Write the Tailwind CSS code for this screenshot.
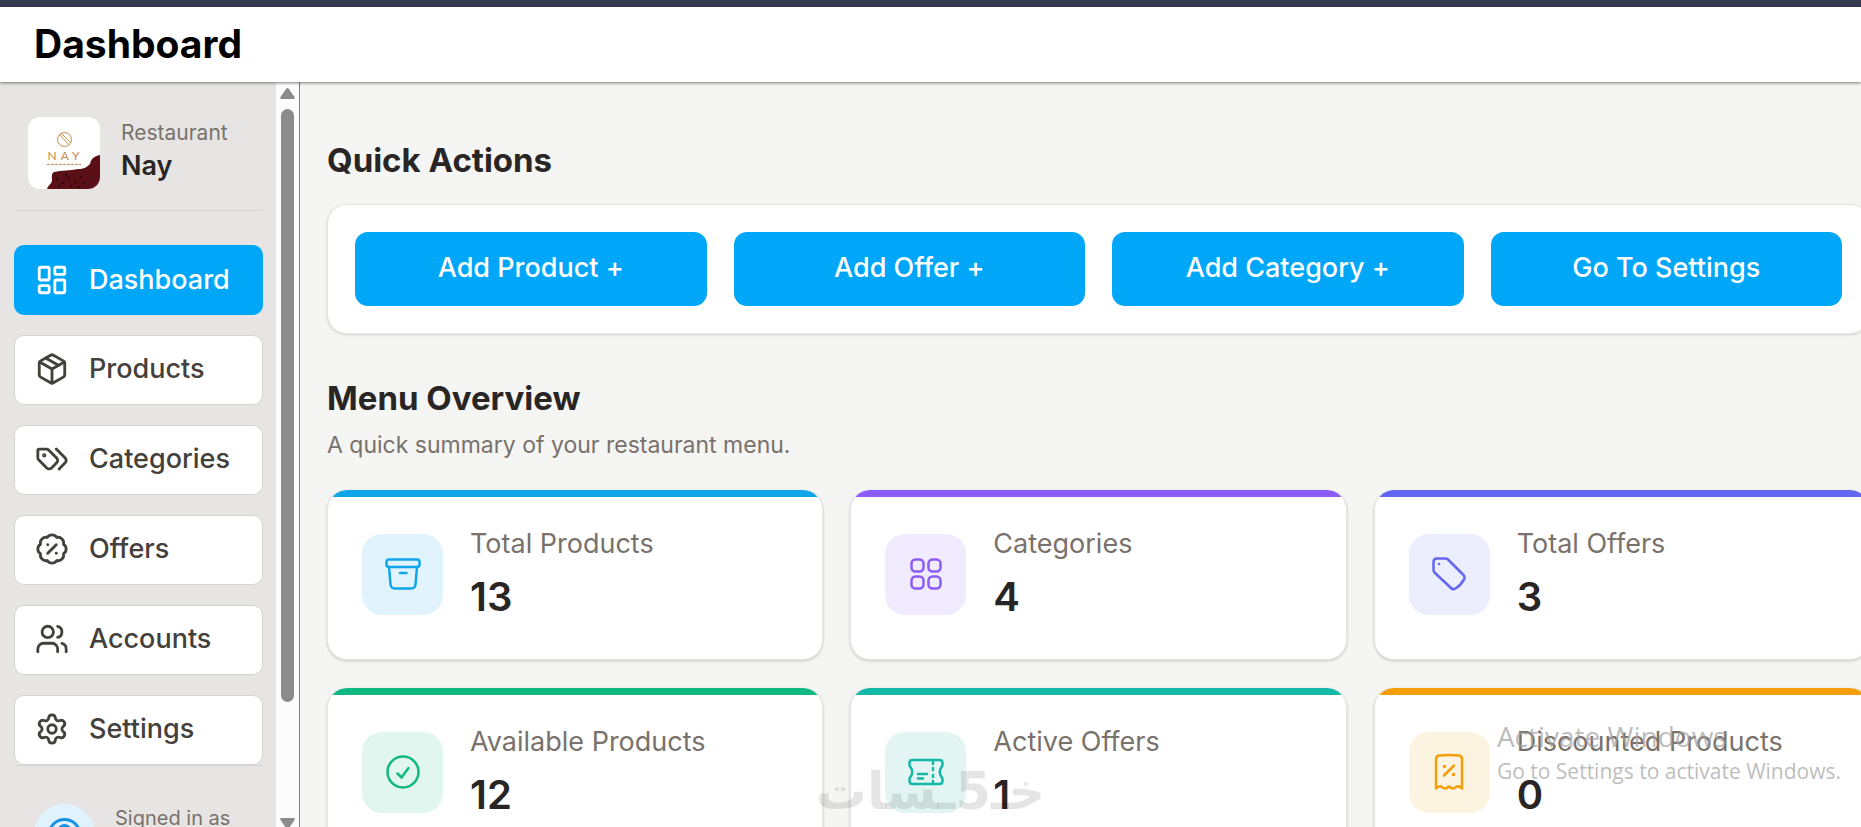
<!DOCTYPE html>
<html lang="en">
<head>
  <meta charset="UTF-8">
  <meta name="viewport" content="width=device-width, initial-scale=1.0">
  <title>Dashboard</title>
  <script src="https://cdn.jsdelivr.net/npm/@tailwindcss/browser@4"></script>
  <style>
    body {
      font-family: Inter, 'Liberation Sans', sans-serif;
    }
  </style>
</head>
<body class="relative h-screen overflow-hidden flex flex-col bg-stone-100 text-stone-800">
  <div class="h-[7px] shrink-0 bg-[#363a50]"></div>

  <!-- Header -->
  <header class="relative z-10 h-[75px] shrink-0 flex items-center px-[34px] pb-[2px] bg-white shadow-[0_1px_3px_rgba(0,0,0,0.5)]">
    <h1 class="text-[39px] leading-[48px] font-bold text-black">Dashboard</h1>
  </header>

  <div class="flex flex-1 min-h-0">
    <!-- Sidebar -->
    <aside class="w-[300px] shrink-0 flex border-r border-[#1e9be9] bg-stone-200">
      <div class="flex-1 min-w-0 overflow-hidden pl-[14px] pr-[13px]">
        <div class="flex items-start gap-[21px] pl-[14px] pt-[35px] pb-[21px] border-b border-stone-300">
          <svg class="size-[72px] shrink-0 rounded-xl bg-white" viewBox="0 0 72 72" fill="none">
            <path d="M19 72c1-4 5-5 5-9 0-3-1-6 2-8 8-2 16-1 24-3 6 0 9-2 12-5 1-5 4-8 10-9v34z" fill="#5a0f17"/>
            <g fill="#1d0508">
              <circle cx="29" cy="62" r="1"/><circle cx="35" cy="66" r="1"/><circle cx="41" cy="61" r="1"/><circle cx="47" cy="65" r="1"/><circle cx="53" cy="60" r="1"/><circle cx="31" cy="69" r="1"/><circle cx="43" cy="69" r="1"/><circle cx="51" cy="70" r="1"/><circle cx="56" cy="66" r="1"/><circle cx="38" cy="58" r="1"/>
            </g>
            <g stroke="#c98a4b">
              <circle cx="36.500" cy="22.500" r="7"/>
              <path d="M31 17l10 11M33 16l10 10"/>
            </g>
            <text x="37.500" y="43" text-anchor="middle" font-size="12" font-family="Lato, sans-serif" letter-spacing="4" fill="#c98a4b">NAY</text>
            <path d="M19 47.500h34" stroke="#c98a4b" stroke-dasharray="3 1"/>
          </svg>
          <div>
            <p class="text-[21px] leading-[32px] text-stone-500">Restaurant</p>
            <p class="text-[27px] leading-[34px] font-semibold">Nay</p>
          </div>
        </div>

        <nav class="flex flex-col gap-5 pt-[34px] border-b border-stone-300 text-[27px] leading-[36px] font-medium text-stone-700">
          <a href="#" class="h-[70px] flex items-center gap-5 px-[21px] rounded-[10px] bg-[#00a6f8] text-white">
            <svg class="size-[34px]" viewBox="0 0 24 24" fill="none" stroke="currentColor" stroke-width="2" stroke-linecap="round" stroke-linejoin="round"><rect width="7" height="9" x="3" y="3" rx="1"/><rect width="7" height="5" x="14" y="3" rx="1"/><rect width="7" height="9" x="14" y="12" rx="1"/><rect width="7" height="5" x="3" y="16" rx="1"/></svg>
            Dashboard
          </a>
          <a href="#" class="h-[70px] flex items-center gap-5 px-5 pb-[2px] rounded-[10px] border border-stone-300 bg-white">
            <svg class="size-[34px]" viewBox="0 0 24 24" fill="none" stroke="currentColor" stroke-width="2" stroke-linecap="round" stroke-linejoin="round"><path d="M11 21.730a2 2 0 0 0 2 0l7-4A2 2 0 0 0 21 16V8a2 2 0 0 0-1-1.730l-7-4a2 2 0 0 0-2 0l-7 4A2 2 0 0 0 3 8v8a2 2 0 0 0 1 1.730z"/><path d="M12 22V12"/><path d="M3.290 7 12 12l8.710-5"/><path d="m7.500 4.270 9 5.150"/></svg>
            Products
          </a>
          <a href="#" class="h-[70px] flex items-center gap-5 px-5 pb-[2px] rounded-[10px] border border-stone-300 bg-white">
            <svg class="size-[34px]" viewBox="0 0 24 24" fill="none" stroke="currentColor" stroke-width="2" stroke-linecap="round" stroke-linejoin="round"><path d="m15 5 6.300 6.300a2.400 2.400 0 0 1 0 3.400L17 19"/><path d="M9.586 5.586A2 2 0 0 0 8.172 5H3a1 1 0 0 0-1 1v5.172a2 2 0 0 0 .586 1.414L8.290 18.290a2.426 2.426 0 0 0 3.420 0l3.580-3.580a2.426 2.426 0 0 0 0-3.420z"/><circle cx="6.500" cy="9.500" r=".5" fill="currentColor"/></svg>
            Categories
          </a>
          <a href="#" class="h-[70px] flex items-center gap-5 px-5 pb-[2px] rounded-[10px] border border-stone-300 bg-white">
            <svg class="size-[34px]" viewBox="0 0 24 24" fill="none" stroke="currentColor" stroke-width="2" stroke-linecap="round" stroke-linejoin="round"><path d="M3.850 8.620a4 4 0 0 1 4.780-4.770 4 4 0 0 1 6.740 0 4 4 0 0 1 4.780 4.780 4 4 0 0 1 0 6.740 4 4 0 0 1-4.770 4.780 4 4 0 0 1-6.750 0 4 4 0 0 1-4.780-4.770 4 4 0 0 1 0-6.760Z"/><path d="m15 9-6 6"/><path d="M9 9h.01"/><path d="M15 15h.01"/></svg>
            Offers
          </a>
          <a href="#" class="h-[70px] flex items-center gap-5 px-5 pb-[2px] rounded-[10px] border border-stone-300 bg-white">
            <svg class="size-[34px]" viewBox="0 0 24 24" fill="none" stroke="currentColor" stroke-width="2" stroke-linecap="round" stroke-linejoin="round"><path d="M16 21v-2a4 4 0 0 0-4-4H6a4 4 0 0 0-4 4v2"/><circle cx="9" cy="7" r="4"/><path d="M16 3.128a4 4 0 0 1 0 7.744"/><path d="M22 21v-2a4 4 0 0 0-3-3.870"/></svg>
            Accounts
          </a>
          <a href="#" class="h-[70px] flex items-center gap-5 px-5 pb-[2px] rounded-[10px] border border-stone-300 bg-white">
            <svg class="size-[34px]" viewBox="0 0 24 24" fill="none" stroke="currentColor" stroke-width="2" stroke-linecap="round" stroke-linejoin="round"><path d="M9.671 4.136a2.340 2.340 0 0 1 4.659 0 2.340 2.340 0 0 0 3.319 1.915 2.340 2.340 0 0 1 2.330 4.033 2.340 2.340 0 0 0 0 3.831 2.340 2.340 0 0 1-2.330 4.033 2.340 2.340 0 0 0-3.319 1.915 2.340 2.340 0 0 1-4.659 0 2.340 2.340 0 0 0-3.320-1.915 2.340 2.340 0 0 1-2.330-4.033 2.340 2.340 0 0 0 0-3.831A2.340 2.340 0 0 1 6.350 6.051a2.340 2.340 0 0 0 3.319-1.915"/><circle cx="12" cy="12" r="3"/></svg>
            Settings
          </a>
        </nav>

        <!-- Signed in user -->
        <div class="flex gap-5 pl-5 pt-[38px]">
          <svg class="size-[61px] shrink-0 rounded-full bg-sky-100" viewBox="0 0 61 61" fill="none" stroke="#1593e6" stroke-width="3">
            <circle cx="30.500" cy="31" r="15.500"/>
            <circle cx="30.500" cy="27" r="5.500"/>
            <path d="M20 42c5-8 16-8 21 0"/>
          </svg>
          <p class="text-[20px] leading-[28px] text-stone-500">Signed in as</p>
        </div>
      </div>

      <!-- Scrollbar -->
      <div class="w-[23px] shrink-0 flex flex-col items-center bg-[#fcfcfc]">
        <svg class="w-[15px] h-[11px] mt-[6px] mb-[10px] shrink-0" viewBox="0 0 15 11" fill="#8b8b8b"><path d="M6 1q1.500-2 3 0l5.500 8q1 2-1 2h-12q-2 0-1-2z"/></svg>
        <div class="w-[13px] h-[593px] shrink-0 rounded-full bg-[#8b8b8b]"></div>
        <svg class="w-[15px] h-[11px] mt-auto -mb-[2px] shrink-0" viewBox="0 0 15 11" fill="#8b8b8b"><path d="M6 10q1.500 2 3 0l5.500-8q1-2-1-2h-12q-2 0-1 2z"/></svg>
      </div>
    </aside>

    <!-- Main -->
    <main class="flex-1 min-w-0 overflow-hidden pl-[27px]">
      <div class="-mr-[9px] pt-[57px]">
        <h2 class="text-[33px] leading-[42px] font-bold">Quick Actions</h2>
        <div class="mt-[23px] grid grid-cols-4 gap-[27px] p-[27px] rounded-[20px] border border-stone-200 bg-white shadow-[0_1px_3px_rgba(0,0,0,0.15)] text-[27px] leading-[36px] font-medium text-white">
          <button class="h-[74px] pb-[2px] rounded-[13px] bg-[#00a6f8]">Add Product +</button>
          <button class="h-[74px] pb-[2px] rounded-[13px] bg-[#00a6f8]">Add Offer +</button>
          <button class="h-[74px] pb-[2px] rounded-[13px] bg-[#00a6f8]">Add Category +</button>
          <button class="h-[74px] pb-[2px] rounded-[13px] bg-[#00a6f8]">Go To Settings</button>
        </div>

        <h2 class="mt-[43px] text-[33px] leading-[42px] font-bold">Menu Overview</h2>
        <p class="mt-[9px] text-[23px] leading-[34px] text-stone-500">A quick summary of your restaurant menu.</p>

        <div class="mt-[28px] grid grid-cols-3 gap-x-[27px] gap-y-7">
          <div class="h-[170px] overflow-hidden rounded-[20px] border border-t-0 border-stone-200 bg-white shadow-[0_1px_3px_rgba(0,0,0,0.2)]">
            <div class="h-[7px] bg-[#0ea5e9]"></div>
            <div class="flex items-center gap-[27px] px-[34px] pt-[27px]">
              <div class="size-[81px] shrink-0 flex items-center justify-center rounded-[20px] bg-[#e1f4fd] text-[#0ea5e9]">
                <svg class="size-10" viewBox="0 0 40 40" fill="none" stroke="currentColor" stroke-width="2.500" stroke-linecap="round" stroke-linejoin="round"><rect x="3.500" y="5.500" width="33" height="7.500" rx="2.500"/><path d="M6 13l1.500 17.500q.4 4 4.500 4h16q4.100 0 4.500-4L34 13M17 19h6.500"/></svg>
              </div>
              <div>
                <p class="text-[27px] leading-[40px] text-stone-500">Total Products</p>
                <p class="mt-[6px] text-[40px] leading-[54px] font-semibold">13</p>
              </div>
            </div>
          </div>

          <div class="h-[170px] overflow-hidden rounded-[20px] border border-t-0 border-stone-200 bg-white shadow-[0_1px_3px_rgba(0,0,0,0.2)]">
            <div class="h-[7px] bg-[#8b5cf6]"></div>
            <div class="flex items-center gap-[27px] px-[34px] pt-[27px]">
              <div class="size-[81px] shrink-0 flex items-center justify-center rounded-[20px] bg-[#f0ebfe] text-[#8b5cf6]">
                <svg class="size-10" viewBox="0 0 40 40" fill="none" stroke="currentColor" stroke-width="2.500"><rect x="5.500" y="5.500" width="12" height="12" rx="4"/><rect x="22.500" y="5.500" width="12" height="12" rx="4"/><rect x="5.500" y="22.500" width="12" height="12" rx="4"/><rect x="22.500" y="22.500" width="12" height="12" rx="4"/></svg>
              </div>
              <div>
                <p class="text-[27px] leading-[40px] text-stone-500">Categories</p>
                <p class="mt-[6px] text-[40px] leading-[54px] font-semibold">4</p>
              </div>
            </div>
          </div>

          <div class="h-[170px] overflow-hidden rounded-[20px] border border-t-0 border-stone-200 bg-white shadow-[0_1px_3px_rgba(0,0,0,0.2)]">
            <div class="h-[7px] bg-[#6366f1]"></div>
            <div class="flex items-center gap-[27px] px-[34px] pt-[27px]">
              <div class="size-[81px] shrink-0 flex items-center justify-center rounded-[20px] bg-[#ecedfd] text-[#6366f1]">
                <svg class="size-10" viewBox="0 0 40 40" fill="none" stroke="currentColor" stroke-width="2.500" stroke-linecap="round" stroke-linejoin="round"><path d="M4.500 8q0-3.500 3.500-3.500h8.500q1.500 0 2.500 1L34.500 21q2 2.500 .5 4.500-3.500 6-8.500 9-2.500 1.500-4.500-.5L5.500 18.500q-1-1-1-2.500z"/><path d="M10 10h.01"/></svg>
              </div>
              <div>
                <p class="text-[27px] leading-[40px] text-stone-500">Total Offers</p>
                <p class="mt-[6px] text-[40px] leading-[54px] font-semibold">3</p>
              </div>
            </div>
          </div>

          <div class="h-[170px] overflow-hidden rounded-[20px] border border-t-0 border-stone-200 bg-white shadow-[0_1px_3px_rgba(0,0,0,0.2)]">
            <div class="h-[7px] bg-[#10b981]"></div>
            <div class="flex items-center gap-[27px] px-[34px] pt-[27px]">
              <div class="size-[81px] shrink-0 flex items-center justify-center rounded-[20px] bg-[#e2f6f0] text-[#10b981]">
                <svg class="size-10" viewBox="0 0 40 40" fill="none" stroke="currentColor" stroke-width="2.500" stroke-linecap="round" stroke-linejoin="round"><circle cx="20" cy="20" r="15.500"/><path d="M14.500 21.500l4 4 7-9.500"/></svg>
              </div>
              <div>
                <p class="text-[27px] leading-[40px] text-stone-500">Available Products</p>
                <p class="mt-[6px] text-[40px] leading-[54px] font-semibold">12</p>
              </div>
            </div>
          </div>

          <div class="h-[170px] overflow-hidden rounded-[20px] border border-t-0 border-stone-200 bg-white shadow-[0_1px_3px_rgba(0,0,0,0.2)]">
            <div class="h-[7px] bg-[#14b8a6]"></div>
            <div class="flex items-center gap-[27px] px-[34px] pt-[27px]">
              <div class="size-[81px] shrink-0 flex items-center justify-center rounded-[20px] bg-[#e2f5f3] text-[#14b8a6]">
                <svg class="size-10" viewBox="0 0 40 40" fill="none" stroke="currentColor" stroke-width="2.500" stroke-linecap="round" stroke-linejoin="round"><path d="M6.500 8h27q3 0 3 3v2q0 1-1 2-3.500 5 0 10 1 1 1 2v2q0 3-3 3h-27q-3 0-3-3v-2q0-1 1-2 3.500-5 0-10-1-1-1-2v-2q0-3 3-3z"/><path d="M27 9v3m0 4v2m0 5v2m0 4v2M12 22h9M12 26.500h5"/></svg>
              </div>
              <div>
                <p class="text-[27px] leading-[40px] text-stone-500">Active Offers</p>
                <p class="mt-[6px] text-[40px] leading-[54px] font-semibold">1</p>
              </div>
            </div>
          </div>

          <div class="h-[170px] overflow-hidden rounded-[20px] border border-t-0 border-stone-200 bg-white shadow-[0_1px_3px_rgba(0,0,0,0.2)]">
            <div class="h-[7px] bg-[#f59e0b]"></div>
            <div class="flex items-center gap-[27px] px-[34px] pt-[27px]">
              <div class="size-[81px] shrink-0 flex items-center justify-center rounded-[20px] bg-[#fdf3e1] text-[#f59e0b]">
                <svg class="size-10" viewBox="0 0 40 40" fill="none" stroke="currentColor" stroke-width="2.500" stroke-linecap="round" stroke-linejoin="round"><path d="M7 36.500V7q0-3 3-3.500 10-1 20 0 3 .5 3 3.500v29.500l-2-1.500q-2-1.500-4 0l-1.500 1q-2 1.300-4-.5l-.5-.5q-1-1-2 0l-.5 .5q-2 1.800-4 .5l-1.500-1q-2-1.500-4 0z"/><path d="M15 23.500l10-10"/><path d="M15.500 14.500h.01M24.500 22.500h.01" stroke-width="3.500"/></svg>
              </div>
              <div>
                <p class="text-[27px] leading-[40px] text-stone-500">Discounted Products</p>
                <p class="mt-[6px] text-[40px] leading-[54px] font-semibold">0</p>
              </div>
            </div>
          </div>
        </div>
      </div>
    </main>
  </div>

  <!-- Overlays -->
  <div dir="rtl" class="absolute z-20 left-1/2 -translate-x-1/2 bottom-0 text-[51px] leading-[70px] font-bold text-black/10 font-['DejaVu_Sans'] whitespace-nowrap pointer-events-none">خـ5ـسات</div>
  <div class="absolute z-20 right-[20px] bottom-[40px] font-['Open_Sans'] text-[#a0a0a0]/70 pointer-events-none">
    <p class="text-[28px] leading-[38px]">Activate Windows</p>
    <p class="text-[21px] leading-[32px]">Go to Settings to activate Windows.</p>
  </div>
</body>
</html>
